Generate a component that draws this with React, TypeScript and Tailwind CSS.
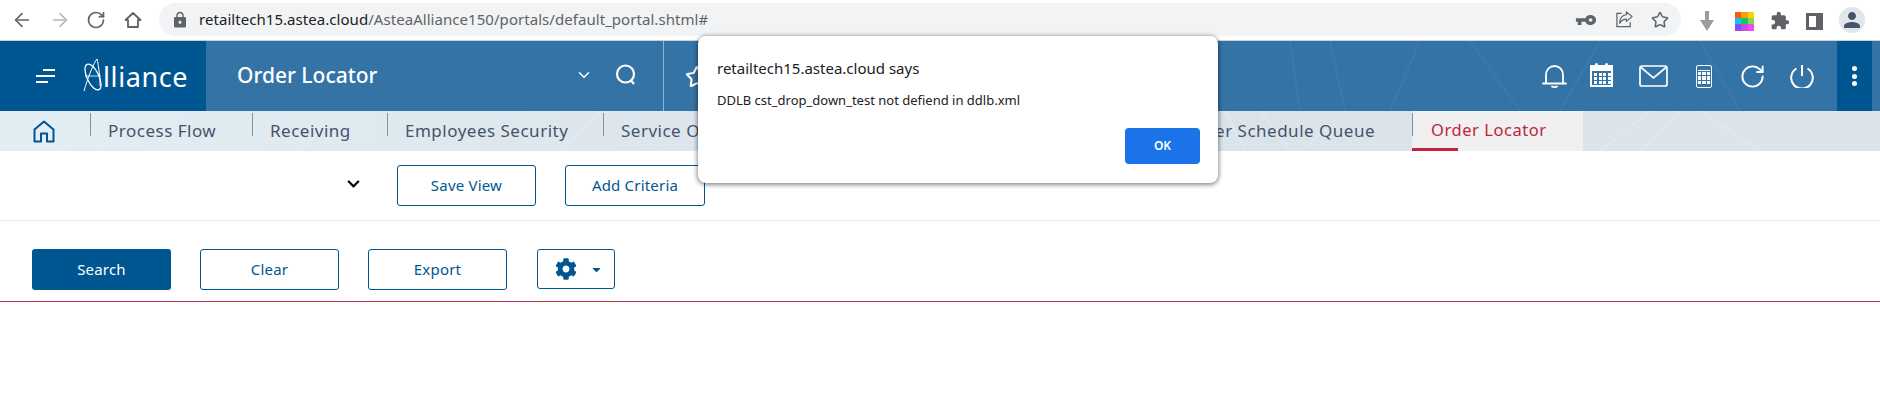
import { ArrowLeft, ArrowRight, RotateCw, Star, ChevronDown } from "lucide-react";
import { FaCog, FaChevronDown, FaCaretDown } from "react-icons/fa";
import { MdExtension, MdLock, MdPerson, MdVpnKey } from "react-icons/md";

function BrowserBar() {
    return (
        <div className="flex h-[41px] items-start border-b border-[#cfd1d3] bg-white">
            <div className="flex h-[39px] w-[159px] items-center text-[#5f6368]">
                <ArrowLeft className="ml-[11px] h-[22px] w-[22px]" strokeWidth={1.8} />
                <ArrowRight className="ml-[16px] h-[22px] w-[22px] text-[#b5b7ba]" strokeWidth={1.8} />
                <RotateCw className="ml-[15px] h-[20px] w-[20px]" strokeWidth={2} />
                <svg viewBox="0 0 20 20" className="ml-[17px] h-[20px] w-[20px]" fill="none" stroke="currentColor" strokeWidth="1.8">
                    <path d="M10 3 L2.5 10 H5 V17 H15 V10 H17.5 Z" strokeLinejoin="round" />
                </svg>
            </div>
            <div className="mt-[3px] flex h-[33px] w-[1522px] items-center rounded-full bg-[#f1f3f4]">
                <MdLock className="ml-[12px] h-[18px] w-[18px] text-[#5f6368]" />
                <span className="ml-[10px] text-[15px] tracking-[0.05px] text-[#5f6368]">
                    <span className="text-[#202124]">retailtech15.astea.cloud</span>/AsteaAlliance150/portals/default_portal.shtml#
                </span>
                <div className="ml-auto flex items-center text-[#5f6368]">
                    <MdVpnKey className="mr-[19px] h-[20px] w-[20px] scale-x-110 -scale-y-100 rotate-180" />
                    <svg viewBox="0 0 20 20" className="mr-[17px] h-[19px] w-[19px]" fill="none" stroke="currentColor" strokeWidth="1.3">
                        <path d="M7 3.5 H2 V17.5 H16 V13" />
                        <path d="M12 2 L18 7 L12 12 V9.5 C8.5 9.5 6.5 11 5 14 C5 9 7.5 5.5 12 5 Z" strokeLinejoin="round" />
                    </svg>
                    <Star className="mr-[12px] h-[18px] w-[18px]" strokeWidth={2} />
                </div>
            </div>
            <div className="mt-[9px] flex items-center">
                <svg viewBox="0 0 14 20" className="ml-[19px] h-[20px] w-[14px]">
                    <path d="M5 0 H9 V9 H14 L7 20 L0 9 H5 Z" fill="#9a9c9f" />
                </svg>
                <div className="ml-[21px] grid h-[19px] w-[19px] grid-cols-3 grid-rows-3">
                    <div className="bg-[#fb5a0e]" />
                    <div className="bg-[#fb9a12]" />
                    <div className="bg-[#fdd00a]" />
                    <div className="bg-[#17bdf5]" />
                    <div className="bg-[#14c85a]" />
                    <div className="bg-[#86d84a]" />
                    <div className="bg-[#8a4df0]" />
                    <div className="bg-[#c04cf0]" />
                    <div className="bg-[#f04cf0]" />
                </div>
                <MdExtension className="ml-[16px] h-[20px] w-[20px] text-[#5f6368]" />
                <div className="ml-[16px] flex h-[17px] w-[17px] justify-end border-[3px] border-[#5f6368] bg-white">
                    <div className="h-full w-[4px] bg-[#5f6368]" />
                </div>
                <div className="ml-[16px] -mt-[2px] flex h-[26px] w-[26px] items-center justify-center rounded-full bg-[#e3e5e8]">
                    <MdPerson className="h-[24px] w-[24px] text-[#44546a]" />
                </div>
            </div>
        </div>
    );
}

function BellIcon() {
    return (
        <svg viewBox="0 0 25 23" className="h-[23px] w-[25px]" fill="none" stroke="white" strokeWidth="1.8">
            <path d="M4 18 V10 C4 4.5 8 1 12.5 1 C17 1 21 4.5 21 10 V18" />
            <path d="M1 18.5 H24" strokeLinecap="round" />
            <path d="M10 21.5 C11 22.3 14 22.3 15 21.5" strokeLinecap="round" />
        </svg>
    );
}

function CalendarIcon() {
    const cells = [1, 2, 3, 4, 5, 6, 7, 8, 9, 10, 11, 12];
    return (
        <div className="relative ml-[23px] flex h-[22px] w-[23px] flex-col border-2 border-white">
            <div className="h-[4px] bg-white" />
            <div className="mt-[2px] ml-[2px] grid grid-cols-4 gap-[1px]">
                {cells.map((c) => (
                    <div key={c} className="h-[3px] w-[3px] bg-white" />
                ))}
            </div>
            <div className="absolute -top-[4px] left-[3px] h-[6px] w-[3px] rounded-full bg-white" />
            <div className="absolute -top-[4px] right-[3px] h-[6px] w-[3px] rounded-full bg-white" />
        </div>
    );
}

function CalculatorIcon() {
    const keys = [1, 2, 3, 4, 5, 6, 7, 8, 9];
    return (
        <div className="ml-[28px] h-[23px] w-[16px] rounded-[2px] border-[1.5px] border-white p-[1px]">
            <div className="h-[4px] border-b border-white" />
            <div className="mt-[1px] grid grid-cols-3 gap-[1px]">
                {keys.map((k) => (
                    <div key={k} className="h-[3.5px] bg-white" />
                ))}
            </div>
        </div>
    );
}

// faint streaks of the portal's background image
function Streaks({ lines, opacity }: { lines: string[]; opacity: string }) {
    return (
        <svg viewBox="0 0 1880 70" preserveAspectRatio="none" className={`pointer-events-none absolute inset-0 h-full w-full ${opacity}`} fill="none" stroke="white" strokeWidth="2">
            {lines.map((d) => (
                <path key={d} d={d} />
            ))}
        </svg>
    );
}

function AppHeader() {
    return (
        <div className="relative flex h-[70px] bg-[#3473a5]">
            <Streaks opacity="opacity-[0.04]" lines={["M1290 0 L1300 70", "M1330 0 L1345 70", "M1420 0 L1390 70", "M1470 0 L1520 70", "M1600 0 L1560 70", "M1700 0 L1740 70"]} />
            <div className="relative flex w-[206px] items-center bg-[#005691]">
                <div className="ml-[36px] flex h-[14px] w-[19px] flex-col items-end justify-between">
                    <div className="h-[2px] w-[12px] bg-white" />
                    <div className="h-[2px] w-[19px] bg-white" />
                    <div className="mr-[7px] h-[2px] w-[12px] bg-white" />
                </div>
                <svg viewBox="0 0 22 36" className="ml-[28px] h-[36px] w-[22px]" fill="none" stroke="white" strokeWidth="1">
                    <path d="M1 33 C4 22 11 4 14 1 C16 8 17 22 17 28" />
                    <ellipse cx="10" cy="19" rx="6" ry="14" transform="rotate(-25 10 19)" strokeWidth="1.3" />
                    <path d="M2 18 H18" strokeWidth="0.8" />
                </svg>
                <span className="-ml-[2px] text-[27px] leading-none font-normal tracking-[0.6px] text-white">lliance</span>
            </div>
            <div className="relative flex w-[458px] items-center border-r border-[#8fb3cf] pl-[31px] text-white">
                <span className="text-[21px] font-medium">Order Locator</span>
                <ChevronDown className="-mt-[3px] ml-[198px] h-[18px] w-[18px]" strokeWidth={2} />
                <svg viewBox="0 0 24 24" className="-mt-[3px] ml-[21px] h-[24px] w-[24px]" fill="none" stroke="white" strokeWidth="2.2">
                    <circle cx="11.5" cy="11" r="8.5" />
                    <path d="M17 17.5 L20 21" />
                </svg>
            </div>
            <Star className="relative mt-[24px] ml-[21px] h-[24px] w-[24px] text-white" strokeWidth={2} />
            <div className="relative ml-auto flex items-center">
                <div className="flex items-center">
                    <BellIcon />
                    <CalendarIcon />
                    <svg viewBox="0 0 29 22" className="ml-[26px] h-[22px] w-[29px]" fill="none" stroke="white" strokeWidth="1.7">
                        <rect x="1" y="1" width="27" height="20" rx="2" />
                        <path d="M1.5 2 L14.5 13 L27.5 2" />
                    </svg>
                    <CalculatorIcon />
                    <RotateCw className="ml-[27px] h-[27px] w-[27px] text-white" strokeWidth={1.7} />
                    <svg viewBox="0 0 24 24" className="ml-[24px] h-[24px] w-[24px]" fill="none" stroke="white" strokeWidth="2">
                        <path d="M12 1 V12" />
                        <path d="M6.5 4.5 A10.8 10.8 0 1 0 17.5 4.5" />
                    </svg>
                </div>
                <div className="ml-[23px] flex h-full w-[35px] flex-col items-center justify-center gap-[2.5px] bg-[#005691]">
                    <div className="h-[5px] w-[5px] rounded-full bg-white" />
                    <div className="h-[5px] w-[5px] rounded-full bg-white" />
                    <div className="h-[5px] w-[5px] rounded-full bg-white" />
                </div>
                <div className="w-[8px]" />
            </div>
        </div>
    );
}

function Tab({ label, width }: { label: string; width: string }) {
    return (
        <div className={`relative flex h-full items-center pl-[18px] text-[17px] tracking-[0.5px] whitespace-nowrap text-[#44546a] ${width}`}>
            <div className="absolute top-[2px] left-0 h-[23px] w-px bg-[#8c9196]" />
            <span className="-mt-[1px]">{label}</span>
        </div>
    );
}

function TabBar() {
    return (
        <div className="relative flex h-[40px] bg-gradient-to-r from-[#e3edf4] via-[#dae3ea] to-[#dde5ec]">
            <Streaks
                opacity="opacity-20"
                lines={["M60 70 L120 0", "M95 70 L150 0", "M300 70 L340 0", "M560 70 L600 0", "M1245 70 L1225 0", "M1260 0 L1290 70", "M1300 70 L1350 0", "M1600 70 L1650 0", "M1640 70 L1680 0", "M1700 0 L1760 70"]}
            />
            <div className="relative flex w-[90px] items-center">
                <svg viewBox="0 0 22 23" className="ml-[33px] h-[23px] w-[22px]" fill="none" stroke="#005691" strokeWidth="2">
                    <path d="M11 1.5 L1.5 9.5 V21.5 H8 V13.5 H14 V21.5 H20.5 V9.5 Z" strokeLinejoin="round" />
                </svg>
            </div>
            <Tab label="Process Flow" width="w-[162px]" />
            <Tab label="Receiving" width="w-[135px]" />
            <Tab label="Employees Security" width="w-[216px]" />
            <Tab label="Service Orders" width="w-[200px]" />
            <div className="relative flex h-full w-[609px] items-center justify-end pr-[37px] text-[17px] tracking-[0.5px] whitespace-nowrap text-[#44546a]">
                <span className="-mt-[1px]">Order Schedule Queue</span>
            </div>
            <div className="relative flex h-full w-[171px] items-center bg-[#f0f0f0] pl-[19px] text-[16.5px] tracking-[0.55px] whitespace-nowrap text-[#c0233f]">
                <div className="absolute top-[2px] left-0 h-[23px] w-px bg-[#8c9196]" />
                <span className="-mt-[1px]">Order Locator</span>
                <div className="absolute bottom-0 left-0 h-[3px] w-[46px] bg-[#c0233f]" />
            </div>
        </div>
    );
}

function OutlineButton({ label, width }: { label: string; width: string }) {
    return (
        <button className={`h-[41px] rounded-[3px] border border-[#005691] bg-white text-[15px] tracking-[0.2px] text-[#005691] ${width}`}>
            {label}
        </button>
    );
}

function AlertDialog() {
    return (
        <div className="absolute top-[36px] left-[698px] h-[147px] w-[520px] rounded-[8px] bg-white shadow-[0_1px_4px_1px_rgba(0,0,0,0.45)]">
            <div className="flex h-full flex-col pt-[22px] pr-[18px] pl-[19px]">
                <div className="text-[15px] leading-[20px] text-[#202124]">retailtech15.astea.cloud says</div>
                <div className="mt-[14px] text-[13px] leading-[16px] text-[#202124]">DDLB cst_drop_down_test not defiend in ddlb.xml</div>
                <button className="mt-[20px] ml-auto h-[36px] w-[75px] rounded-[4px] bg-[#1a73e8] text-[12px] font-semibold text-white">OK</button>
            </div>
        </div>
    );
}

export default function App() {
    return (
        <div className="relative h-[402px] w-[1880px] overflow-hidden bg-white font-['Noto_Sans',sans-serif]">
            <BrowserBar />
            <AppHeader />
            <TabBar />
            <div className="flex h-[70px] items-center gap-[29px] border-b border-[#e6e7e8] pl-[346px]">
                <FaChevronDown className="mr-[7px] -mt-[4px] h-[14px] w-[15px] text-black" />
                <OutlineButton label="Save View" width="w-[139px]" />
                <OutlineButton label="Add Criteria" width="w-[140px]" />
            </div>
            <div className="flex h-[81px] items-start gap-[29px] border-b border-[#b5335a] pt-[28px] pl-[32px]">
                <button className="h-[41px] w-[139px] rounded-[3px] bg-[#005691] text-[15px] tracking-[0.2px] text-white">Search</button>
                <OutlineButton label="Clear" width="w-[139px]" />
                <OutlineButton label="Export" width="w-[139px]" />
                <button className="ml-[1px] flex h-[40px] w-[78px] items-center rounded-[3px] border border-[#005691] text-[#005691]">
                    <FaCog className="ml-[17px] h-[22px] w-[22px]" />
                    <FaCaretDown className="ml-[13px] h-[13px] w-[13px]" />
                </button>
            </div>
            <AlertDialog />
        </div>
    );
}
